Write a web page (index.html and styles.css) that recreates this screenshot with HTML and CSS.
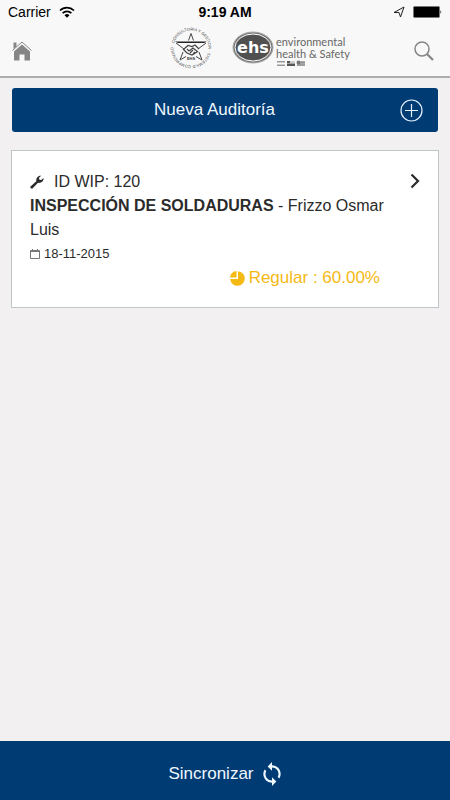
FILE: index.html
```html
<!DOCTYPE html>
<html lang="es">
<head>
    <meta charset="UTF-8">
    <meta name="viewport" content="width=device-width, initial-scale=1.0">
    <title>Auditorías</title>
    <link rel="stylesheet" href="styles.css">
</head>
<body>

    <header class="header">
        <div class="status-bar">
            <div class="carrier">
                <span>Carrier</span>
                <svg width="16" height="12" viewBox="0 0 16 12" fill="none" stroke="#000" stroke-width="1.700">
                    <path d="M1 4.500a10 10 0 0 1 14 0M3.600 7.200a6.400 6.400 0 0 1 8.800 0"/>
                    <path d="M5.500 9.200a3.600 3.600 0 0 1 5 0L8 11.800z" fill="#000" stroke="none"/>
                </svg>
            </div>
            <span class="clock">9:19 AM</span>
            <div class="battery">
                <svg width="12" height="12" viewBox="0 0 12 12" fill="none" stroke="#222" stroke-width="1">
                    <path d="M1 6.500L11 1L7.500 11L6 6.500z"/>
                </svg>
                <svg width="29" height="12" viewBox="0 0 29 12">
                    <rect x=".5" y=".5" width="26" height="11" rx="1" fill="#000" stroke="#777"/>
                    <path d="M27.500 4q1.500 2 0 4z" fill="#000"/>
                </svg>
            </div>
        </div>

        <nav class="nav">
            <a href="#" aria-label="Inicio">
                <svg width="20" height="20" viewBox="0 0 20 20" fill="#858585">
                    <path d="M1.500 1.500h3v4l-3 2.500zM2 10.500l8-7l8 7v9h-5.500v-6h-5v6h-5.500z"/>
                    <path d="M.5 9.500L10 1l9.500 8.500" fill="none" stroke="#858585" stroke-width="1"/>
                </svg>
            </a>
            <div class="logos">
                <svg width="42" height="42" viewBox="0 0 42 42">
                    <path id="ring" d="M21 38.500a17.500 17.500 0 1 1 .1 0" fill="none"/>
                    <text class="ring-text"><textPath href="#ring">COMPROMISO · CONSULTORIA Y GESTION · SISTEMA DE CALIDAD</textPath></text>
                    <path d="M18.500 13.500L21 6.500l2.500 7M13 25l-3 8l6-3.500M29 25l3 8l-6-3.500M6 16l8 6M36 16l-8 6" fill="none" stroke="#444" stroke-width="1"/>
                    <path d="M5 14.500h32l-3 1.500H8z" fill="#222"/>
                    <path d="M14 22l4-3.500l4 1l3-1.500l4 4M13 22l4 4l5 2l5-3M17 22l2 2l4-3l5 4M20 26l3-3M23 27l2-2" fill="none" stroke="#444" stroke-width="1.200"/>
                    <text class="star-text" x="21" y="33" text-anchor="middle">EHS</text>
                </svg>
                <svg width="120" height="36" viewBox="0 0 120 36">
                    <ellipse cx="21" cy="17.500" rx="20" ry="15.500" fill="#777" stroke="#aaa"/>
                    <ellipse cx="21" cy="17.500" rx="18" ry="13.500" fill="#505050" stroke="#fff" stroke-width="1"/>
                    <text class="ehs-text" x="21" y="23" text-anchor="middle">ehs</text>
                    <text class="brand-text" x="44" y="16">environmental</text>
                    <text class="brand-text" x="44" y="28">health &amp; Safety</text>
                    <path d="M45 31h8v1.500h-8zM45 34.500h8v1.500h-8z" fill="#999"/>
                    <path d="M55 31h3v2h-3zM55 33.500h8v2.500h-8z" fill="#555"/>
                    <path d="M58 31h5v2h-5z" fill="#ccc"/>
                    <path d="M65 31h8v5h-8z" fill="#aaa"/>
                    <path d="M65 31h3v3h-3zM69 32.500h4M65 35h8" fill="#777" stroke="#777" stroke-width=".5"/>
                </svg>
            </div>
            <button class="nav-button" type="button" aria-label="Buscar">
                <svg width="20" height="20" viewBox="0 0 20 20" fill="none" stroke="#858585">
                    <circle cx="8" cy="8" r="7" stroke-width="1.500"/>
                    <path d="M13 13l6 6" stroke-width="2.200"/>
                </svg>
            </button>
        </nav>
    </header>

    <main class="content">
        <button class="new-audit" type="button">
            <span class="new-audit-label">Nueva Auditoría</span>
            <svg width="23" height="23" viewBox="0 0 23 23" fill="none" stroke="#e4f2ff" stroke-width="1.200">
                <circle cx="11.500" cy="11.500" r="10.500"/>
                <path d="M5 11.500h13M11.500 5v13"/>
            </svg>
        </button>

        <a class="card" href="#">
            <div class="card-body">
                <div class="card-id">
                    <svg width="14" height="14" viewBox="0 0 14 14" fill="#2b2b2b">
                        <path d="M.5 11.500L6.300 6.200C5.800 3 8 .3 11.200.7L9 2.800L9.400 4.700L11.300 5L13.500 3C14 6 11 8.500 8 7.800L2.500 13.500C1.300 14-.2 12.700.5 11.500z"/>
                    </svg>
                    <span>ID WIP: 120</span>
                </div>
                <div><strong>INSPECCIÓN DE SOLDADURAS</strong> - Frizzo Osmar Luis</div>
                <div class="card-date">
                    <svg width="10" height="10" viewBox="0 0 10 10" fill="none" stroke="#777">
                        <path d="M.5 1.500h9v8h-9zM.5 2.500h9M2.500 0v2M7.500 0v2" stroke-width="1"/>
                    </svg>
                    <span>18-11-2015</span>
                </div>
                <div class="card-score">
                    <svg width="15" height="15" viewBox="0 0 15 15" fill="#f5b914">
                        <path d="M8 .2A7.300 7.300 0 1 1 .2 8H8z"/>
                        <path d="M6.500 0v6.500H0A7 7 0 0 1 6.500 0z"/>
                    </svg>
                    <span>Regular : 60.00%</span>
                </div>
            </div>
            <svg class="chevron" width="10" height="16" viewBox="0 0 10 16" fill="none" stroke="#2b2b2b" stroke-width="2.200">
                <path d="M1.500 1.500L8 8l-6.500 6.500"/>
            </svg>
        </a>
    </main>

    <button class="sync" type="button">
        <span>Sincronizar</span>
        <svg width="20" height="26" viewBox="3 0 18 24" fill="#f0f8ff">
            <path d="M12 4V1L8 5l4 4V6c3.310 0 6 2.690 6 6 0 1.010-.25 1.970-.7 2.800l1.460 1.460A7.930 7.930 0 0 0 20 12c0-4.420-3.580-8-8-8zm0 14c-3.310 0-6-2.690-6-6 0-1.010.25-1.970.7-2.800L5.240 7.740A7.930 7.930 0 0 0 4 12c0 4.420 3.580 8 8 8v3l4-4-4-4v3z"/>
        </svg>
    </button>

</body>
</html>
```

FILE: styles.css
```css
* {
    box-sizing: border-box;
}
body {
    display: flex;
    flex-direction: column;
    min-height: 100vh;
    margin: 0;
    background-color: #f2f0f1;
    color: #2b2b2b;
    font-family: "Liberation Sans", Arial, sans-serif;
    font-size: 16px;
    line-height: 24px;
}
button {
    border: none;
    font-family: inherit;
    cursor: pointer;
}
svg {
    display: block;
    flex-shrink: 0;
    overflow: visible;
}
.header {
    background-color: #f8f8f8;
    border-bottom: 2px solid #adadad;
}
.status-bar {
    display: grid;
    grid-template-columns: 1fr auto 1fr;
    align-items: center;
    padding: 0 8px;
    color: #000;
    font-size: 14px;
}
.carrier {
    display: flex;
    align-items: center;
    gap: 8px;
}
.clock {
    font-weight: bold;
}
.battery {
    display: flex;
    align-items: center;
    justify-content: flex-end;
    gap: 8px;
}
.nav {
    display: flex;
    align-items: center;
    justify-content: space-between;
    height: 52px;
    padding: 2px 16px 0 12px;
}
.nav-button {
    padding: 0;
    background: none;
}
.logos {
    display: flex;
    align-items: center;
    gap: 20px;
    padding: 0 0 6px 76px;
}
.ring-text {
    fill: #444;
    font-size: 4px;
}
.star-text {
    fill: #333;
    font-size: 4px;
    font-weight: bold;
}
.ehs-text {
    fill: #fff;
    font-family: "DejaVu Sans", sans-serif;
    font-size: 16px;
    font-weight: bold;
}
.brand-text {
    fill: #666;
    font-family: Lato, sans-serif;
    font-size: 11px;
}
.content {
    flex: 1;
    padding: 10px 11px;
}
.new-audit {
    display: flex;
    align-items: center;
    width: calc(100% - 2px);
    height: 44px;
    margin: 0 1px 18px;
    padding: 0 15px;
    background-color: #003b73;
    border-radius: 3px;
    color: #f0f8ff;
    font-size: 17px;
}
.new-audit-label {
    flex: 1;
    padding-right: 20px;
    padding-left: 22px;
}
.card {
    display: flex;
    padding: 19px 18px 17px;
    background-color: #fff;
    border: 1px solid #bfc5c9;
    color: inherit;
    text-decoration: none;
}
.card-body {
    flex: 1;
}
.card-id {
    display: flex;
    align-items: center;
    gap: 10px;
}
.card-date {
    display: flex;
    align-items: center;
    gap: 4px;
    font-size: 13px;
}
.card-score {
    display: flex;
    align-items: center;
    justify-content: flex-end;
    gap: 4px;
    padding-right: 30px;
    color: #f5b914;
    font-size: 17px;
}
.chevron {
    margin-top: 3px;
}
.sync {
    display: flex;
    align-items: center;
    justify-content: center;
    gap: 8px;
    height: 59px;
    padding: 6px 0 0;
    background-color: #003b73;
    color: #f0f8ff;
    font-size: 17px;
}
```
